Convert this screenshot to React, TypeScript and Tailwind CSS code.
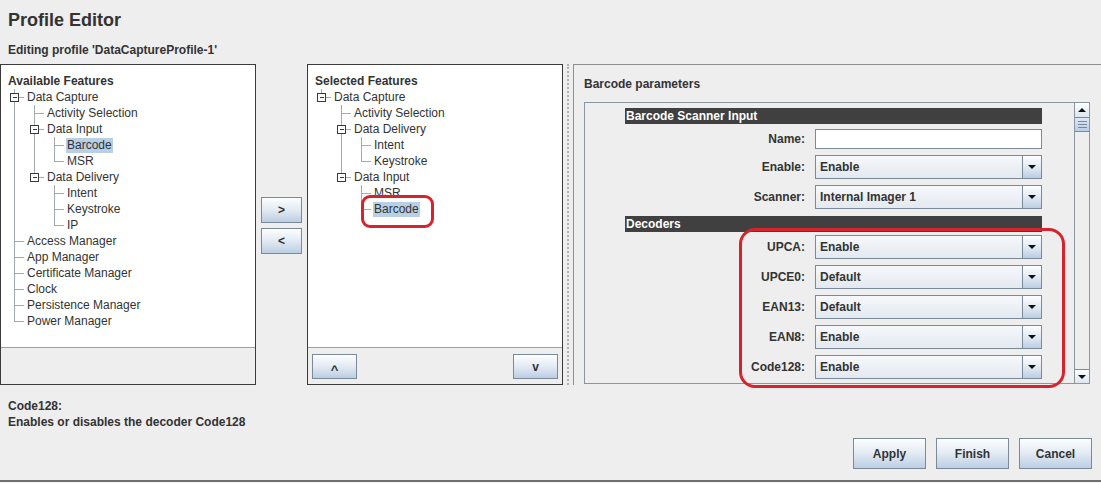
import React from 'react'

type TreeNode = { label: string; children?: TreeNode[]; selected?: boolean }

const availableFeatures: TreeNode[] = [
  {
    label: 'Data Capture',
    children: [
      { label: 'Activity Selection' },
      { label: 'Data Input', children: [{ label: 'Barcode', selected: true }, { label: 'MSR' }] },
      { label: 'Data Delivery', children: [{ label: 'Intent' }, { label: 'Keystroke' }, { label: 'IP' }] },
    ],
  },
  { label: 'Access Manager' },
  { label: 'App Manager' },
  { label: 'Certificate Manager' },
  { label: 'Clock' },
  { label: 'Persistence Manager' },
  { label: 'Power Manager' },
]

const selectedFeatures: TreeNode[] = [
  {
    label: 'Data Capture',
    children: [
      { label: 'Activity Selection' },
      { label: 'Data Delivery', children: [{ label: 'Intent' }, { label: 'Keystroke' }] },
      { label: 'Data Input', children: [{ label: 'MSR' }, { label: 'Barcode', selected: true }] },
    ],
  },
]

const decoders = [
  { label: 'UPCA:', value: 'Enable' },
  { label: 'UPCE0:', value: 'Default' },
  { label: 'EAN13:', value: 'Default' },
  { label: 'EAN8:', value: 'Enable' },
  { label: 'Code128:', value: 'Enable' },
]

type Row = { node: TreeNode; guides: boolean[]; last: boolean }

const flatten = (nodes: TreeNode[], guides: boolean[] = []): Row[] =>
  nodes.flatMap((node, i) => {
    const last = i === nodes.length - 1
    const row: Row = { node, guides, last }
    return [row, ...(node.children ? flatten(node.children, [...guides, !last]) : [])]
  })

const LINE = '#a3aab2'

// one 20x16 cell of the tree legs
const Leg = ({ last, expander }: { last: boolean; expander: boolean }) => (
  <svg width="20" height="16" className="shrink-0" shapeRendering="crispEdges">
    <line x1="10.5" y1="0" x2="10.5" y2={expander ? 4 : 8.5} stroke={LINE} />
    {!last && <line x1="10.5" y1={expander ? 13 : 8} x2="10.5" y2="16" stroke={LINE} />}
    <line x1={expander ? 15 : 10} y1="8.5" x2="21" y2="8.5" stroke={LINE} />
    {expander && (
      <>
        <rect x="6.5" y="4.5" width="8" height="8" fill="#fff" stroke="#3a3a3a" />
        <line x1="8.5" y1="8.5" x2="13" y2="8.5" stroke="#3a3a3a" />
      </>
    )}
  </svg>
)

const Guide = ({ on }: { on: boolean }) => (
  <svg width="20" height="16" className="shrink-0" shapeRendering="crispEdges">
    {on && <line x1="10.5" y1="0" x2="10.5" y2="16" stroke={LINE} />}
  </svg>
)

const FeatureTree = ({ title, nodes }: { title: string; nodes: TreeNode[] }) => (
  <div className="flex flex-col pt-[8px] pl-[3px]">
    <div className="h-[16px] leading-[16px] pl-[4px] font-bold">{title}</div>
    {flatten(nodes).map((row, i) => (
      <div key={i} className="flex h-[16px] items-center">
        {row.guides.map((on, g) => (
          <Guide key={g} on={on} />
        ))}
        <Leg last={row.last} expander={!!row.node.children} />
        <span
          className={
            'ml-[2px] px-[1px] h-[15px] leading-[15px] whitespace-nowrap ' +
            (row.node.selected ? 'bg-[#b8cfe5]' : '')
          }
        >
          {row.node.label}
        </span>
      </div>
    ))}
  </div>
)

const buttonCls =
  'flex items-center justify-center border border-[#7a8a99] bg-linear-to-b from-[#fdfeff] via-[#e2eaf3] to-[#bccee3] font-bold text-[12px] text-[#333]'

const Triangle = ({ up }: { up?: boolean }) => (
  <svg width="8" height="4" viewBox="0 0 8 4">
    <polygon points={up ? '0,4 8,4 4,0' : '0,0 8,0 4,4'} fill="#111" />
  </svg>
)

const Combo = ({ value }: { value: string }) => (
  <div className="flex h-[24px] w-[227px] border border-[#7a8a99] bg-linear-to-b from-[#f6f8fb] to-[#e3e9f0]">
    <div className="flex-1 pl-[4px] leading-[22px] font-bold">{value}</div>
    <div className="flex w-[19px] items-center justify-center border-l border-[#7a8a99] bg-linear-to-b from-[#fdfeff] via-[#e2eaf3] to-[#bccee3]">
      <Triangle />
    </div>
  </div>
)

const FieldRow = ({ label, className, children }: { label: string; className: string; children: React.ReactNode }) => (
  <div className={'flex items-center ' + className}>
    <div className="w-[190px] pr-[10px] text-right font-bold">{label}</div>
    {children}
  </div>
)

const SectionBar = ({ title, className }: { title: string; className: string }) => (
  <div className={'h-[16px] bg-[#404040] pl-[1px] leading-[16px] font-bold text-white ' + className}>{title}</div>
)

export default function App() {
  return (
    <div className="relative flex h-[483px] w-[1101px] flex-col overflow-hidden bg-[#eeeeee] font-['Liberation_Sans',Arial,sans-serif] text-[12px] text-[#333]">
      {/* Header */}
      <div className="h-[64px] pl-[8px] pt-[9px]">
        <div className="text-[18px] leading-[22px] font-bold">Profile Editor</div>
        <div className="mt-[11px] leading-[16px] font-bold">Editing profile 'DataCaptureProfile-1'</div>
      </div>

      {/* Panels */}
      <div className="flex h-[321px]">
        <div className="flex w-[256px] flex-col border border-[#3a3a3a]">
          <div className="h-[283px] border-b border-[#98a3ad] bg-white">
            <FeatureTree title="Available Features" nodes={availableFeatures} />
          </div>
        </div>

        <div className="flex w-[51px] flex-col items-center justify-center gap-[5px] pt-[2px]">
          <button className={buttonCls + ' h-[26px] w-[41px]'}>&gt;</button>
          <button className={buttonCls + ' h-[26px] w-[41px]'}>&lt;</button>
        </div>

        <div className="flex w-[256px] flex-col border border-[#3a3a3a]">
          <div className="h-[283px] border-b border-[#98a3ad] bg-white">
            <FeatureTree title="Selected Features" nodes={selectedFeatures} />
          </div>
          <div className="flex justify-between px-[4px] pt-[6px]">
            <button className={buttonCls + ' h-[25px] w-[45px]'}>
              <span className="translate-y-[3px] text-[13px]">^</span>
            </button>
            <button className={buttonCls + ' h-[25px] w-[45px]'}>v</button>
          </div>
        </div>

        {/* Splitter */}
        <div className="flex w-[10px] justify-center">
          <div className="h-full border-l-2 border-dotted border-[#b0b0b0]" />
        </div>

        {/* Parameters */}
        <div className="flex flex-1 flex-col border-t border-l border-[#8e8e8e] pl-[10px] pr-[11px]">
          <div className="pt-[11px] leading-[16px] font-bold">Barcode parameters</div>
          <div className="mt-[10px] flex flex-1 border border-[#8a97a3] mb-[1px]">
            <div className="flex-1">
              <div className="ml-[40px] flex w-[417px] flex-col">
                <SectionBar title="Barcode Scanner Input" className="mt-[5px]" />
                <FieldRow label="Name:" className="mt-[5px]">
                  <div className="h-[20px] w-[227px] border border-[#7a8a99] bg-white" />
                </FieldRow>
                <FieldRow label="Enable:" className="mt-[6px]">
                  <Combo value="Enable" />
                </FieldRow>
                <FieldRow label="Scanner:" className="mt-[6px]">
                  <Combo value="Internal Imager 1" />
                </FieldRow>
                <SectionBar title="Decoders" className="mt-[7px]" />
                {decoders.map((d, i) => (
                  <FieldRow key={d.label} label={d.label} className={i === 0 ? 'mt-[3px]' : 'mt-[6px]'}>
                    <Combo value={d.value} />
                  </FieldRow>
                ))}
              </div>
            </div>
            {/* Scrollbar */}
            <div className="flex w-[15px] flex-col border-l border-[#8a97a3] bg-[#eeeeee]">
              <div className="flex h-[15px] items-center justify-center border-b border-[#7a8a99] bg-linear-to-b from-[#fdfeff] to-[#dde6ef]">
                <Triangle up />
              </div>
              <div className="flex h-[14px] flex-col items-center justify-center gap-[2px] border-b border-[#7a8a99] bg-linear-to-b from-[#dde8f4] to-[#b8cde4]">
                <div className="h-px w-[9px] bg-[#7a8a99]" />
                <div className="h-px w-[9px] bg-[#7a8a99]" />
                <div className="h-px w-[9px] bg-[#7a8a99]" />
              </div>
              <div className="flex-1" />
              <div className="flex h-[14px] items-center justify-center border-t border-[#7a8a99] bg-linear-to-b from-[#fdfeff] to-[#dde6ef]">
                <Triangle />
              </div>
            </div>
          </div>
        </div>
      </div>

      {/* Description */}
      <div className="pl-[8px] pt-[13px] leading-[16px] font-bold">
        <div>Code128:</div>
        <div>Enables or disables the decoder Code128</div>
      </div>

      {/* Actions */}
      <div className="mt-[8px] flex justify-end gap-[10px] pr-[9px]">
        <button className={buttonCls + ' h-[31px] w-[73px]'}>Apply</button>
        <button className={buttonCls + ' h-[31px] w-[73px]'}>Finish</button>
        <button className={buttonCls + ' h-[31px] w-[73px]'}>Cancel</button>
      </div>

      <div className="mt-auto h-[2px] bg-[#6f6f6f]" />
      <div className="h-px bg-[#f4f4f4]" />

      {/* Red annotation marks */}
      <div className="pointer-events-none absolute left-[361px] top-[195px] h-[33px] w-[73px] rounded-[9px] border-[3px] border-[#d7232b]" />
      <div className="pointer-events-none absolute left-[739px] top-[228px] h-[160px] w-[326px] rounded-[16px] border-[3px] border-[#d7232b]" />
    </div>
  )
}
